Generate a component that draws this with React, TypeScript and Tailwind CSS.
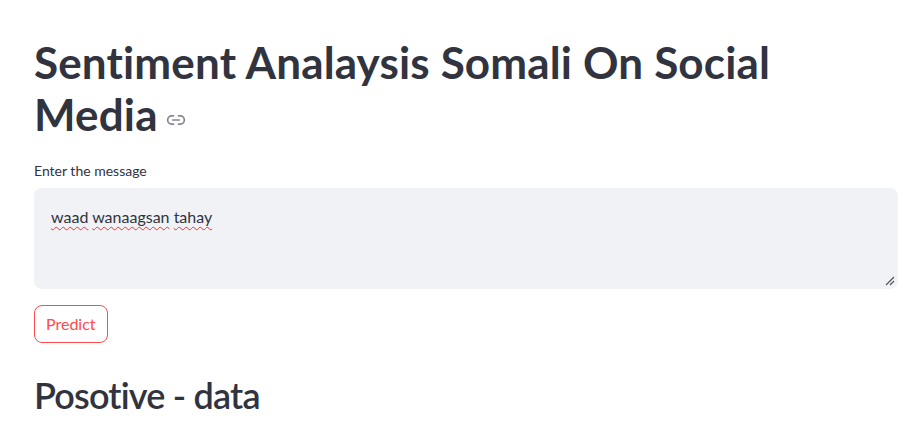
import { Link2 } from "lucide-react";

const words = ["waad", "wanaagsan", "tahay"];

export default function App() {
  return (
    <div className="min-h-screen bg-white pl-[34px] pr-[15px] pt-[36px] font-['Lato','Liberation_Sans',sans-serif] text-[#31333f]">
      <h1 className="text-[44px] font-bold leading-[52px] tracking-[0.15px]">
        Sentiment Analaysis Somali On Social Media
        <Link2 size={20} strokeWidth={2} className="ml-[8px] inline-block align-middle text-[#808495]" />
      </h1>

      <div className="mt-[21px]">
        <label className="block text-[14px] leading-[20px] text-[#31333f]">Enter the message</label>
        <div className="relative mt-[7px] h-[101px] rounded-[8px] bg-[#f0f2f6] px-[17px] py-[16px] text-[16px] leading-[25px]">
          {words.map((w, i) => (
            <span key={w}>
              <span className="underline decoration-[#e53935] decoration-wavy decoration-1 underline-offset-[3px]">{w}</span>
              {i < words.length - 1 ? " " : ""}
            </span>
          ))}
          <svg width="10" height="10" viewBox="0 0 10 10" className="absolute bottom-[3px] right-[3px]">
            <path d="M9 1L1 9M9 5L5 9" stroke="#555" strokeWidth="1.2" />
          </svg>
        </div>
      </div>

      <button className="mt-[16px] h-[38px] rounded-[8px] border border-[#ff4b4b] px-[11px] text-[16px] text-[#ff4b4b]">
        Predict
      </button>

      <h2 className="mt-[30px] text-[36px] font-semibold leading-[44px] tracking-[-0.8px]">Posotive - data</h2>
    </div>
  );
}
